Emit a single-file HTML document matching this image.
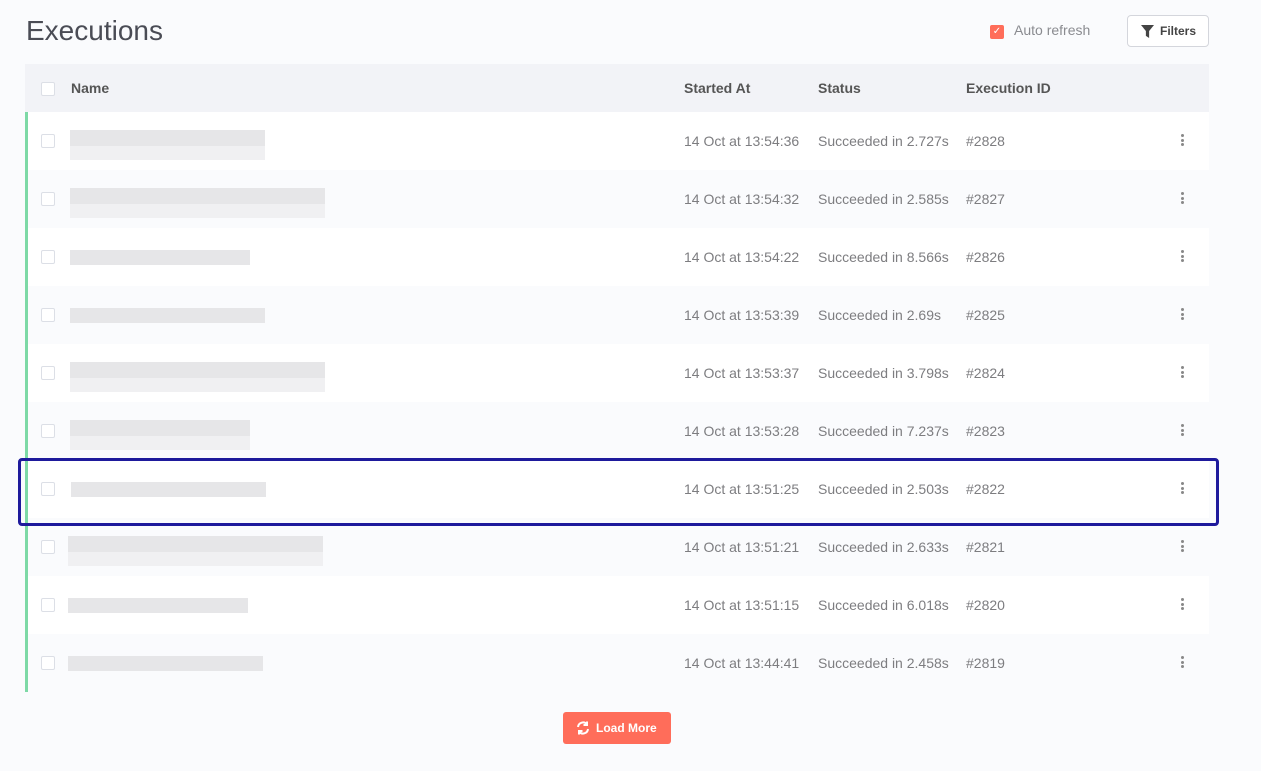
<!DOCTYPE html><html><head><style>
body{margin:0;width:1261px;height:771px;background:#fafbfd;font-family:"Liberation Sans",sans-serif;position:relative;overflow:hidden}
.a{position:absolute}
h1{position:absolute;left:26px;top:15px;margin:0;font-weight:400;font-size:28px;color:#4a4c55}
.hdr{left:25px;top:64px;width:1184px;height:48px;background:#f2f3f7}
.hdr span{position:absolute;top:16px;font-weight:bold;font-size:14px;color:#555}
.cb{position:absolute;width:12px;height:12px;border:1px solid #dcdfe6;border-radius:2px;background:#fff}
.row{position:absolute;left:28px;width:1181px;height:58px;font-size:14px;color:#7d7d80}
.row span{position:absolute;top:21px}
.dots{position:absolute;left:1153px;top:22px;width:3px}
.dots i{display:block;width:3px;height:3px;border-radius:50%;background:#888;margin-bottom:1.5px}
.blur{position:absolute;background:#e6e6e8}
</style></head><body>
<h1>Executions</h1>
<div class="a" style="left:990px;top:25px;width:14px;height:14px;background:#ff6d5a;border-radius:2px;color:#fff;font-size:10px;text-align:center;line-height:14px">✓</div>
<div class="a" style="left:1014px;top:22px;font-size:14px;color:#8a8b90">Auto refresh</div>
<div class="a" style="left:1127px;top:15px;width:80px;height:30px;border:1px solid #d4d6dc;border-radius:4px;background:#fff;font-size:12px;color:#444;font-weight:bold">
<svg class="a" style="left:13px;top:9px" width="13" height="13" viewBox="0 0 12 12"><path d="M0 0H12L7.5 5.5V12L4.5 10V5.5Z" fill="#444"/></svg>
<span class="a" style="left:32px;top:8px">Filters</span></div>
<div class="a hdr"><div class="cb" style="left:16px;top:18px"></div>
<span style="left:46px">Name</span><span style="left:659px">Started At</span><span style="left:793px">Status</span><span style="left:941px">Execution ID</span></div>
<div class="a" style="left:25px;top:112px;width:3px;height:580px;background:#7dd9a6"></div>
<div id="rows"></div>
<script>
var d=[["14 Oct at 13:54:36","2.727s","2828",195,2,42],["14 Oct at 13:54:32","2.585s","2827",255,2,42],["14 Oct at 13:54:22","8.566s","2826",180,1,42],["14 Oct at 13:53:39","2.69s","2825",195,1,42],["14 Oct at 13:53:37","3.798s","2824",255,2,42],["14 Oct at 13:53:28","7.237s","2823",180,2,42],["14 Oct at 13:51:25","2.503s","2822",195,1,43],["14 Oct at 13:51:21","2.633s","2821",255,2,40],["14 Oct at 13:51:15","6.018s","2820",180,1,40],["14 Oct at 13:44:41","2.458s","2819",195,1,40]];
var h="";d.forEach(function(r,i){var y=112+i*58;
var b=r[4]==1?'<div class="blur" style="left:'+r[5]+'px;top:22px;width:'+r[3]+'px;height:15px"></div>':'<div class="blur" style="left:'+r[5]+'px;top:18px;width:'+r[3]+'px;height:16px"></div><div class="blur" style="left:'+r[5]+'px;top:34px;width:'+r[3]+'px;height:14px;background:#f0f0f2"></div>';
h+='<div class="row" style="top:'+y+'px;background:'+(i%2?'#fafbfd':'#fff')+'"><div class="cb" style="left:13px;top:22px"></div>'+b+'<span style="left:656px">'+r[0]+'</span><span style="left:790px">Succeeded in '+r[1]+'</span><span style="left:938px">#'+r[2]+'</span><div class="dots"><i></i><i></i><i></i></div></div>';});
document.getElementById("rows").innerHTML=h;
</script>
<div class="a" style="left:18px;top:458px;width:1195px;height:62px;border:3px solid #1e1a9c;border-radius:4px"></div>
<div class="a" style="left:563px;top:712px;width:108px;height:32px;background:#ff6d5a;border-radius:3px;color:#fff;font-weight:bold;font-size:12px">
<svg class="a" style="left:13px;top:9px" width="14" height="14" viewBox="0 0 14 14" fill="none" stroke="#fff" stroke-width="2"><path d="M2 6A5 5 0 0 1 11 3.5M12 8A5 5 0 0 1 3 10.5"/><path d="M11 0.5V4H7.5M3 13.5V10H6.5"/></svg>
<span class="a" style="left:33px;top:9px">Load More</span></div>
</body></html>
